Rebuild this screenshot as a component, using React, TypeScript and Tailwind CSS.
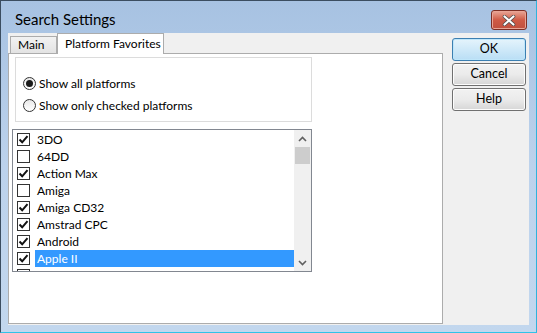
import React from "react";

const font = { fontFamily: '"Segoe UI", Lato, "Noto Sans", sans-serif' };

const items: { name: string; checked: boolean }[] = [
  { name: "3DO", checked: true },
  { name: "64DD", checked: false },
  { name: "Action Max", checked: true },
  { name: "Amiga", checked: false },
  { name: "Amiga CD32", checked: true },
  { name: "Amstrad CPC", checked: true },
  { name: "Android", checked: true },
  { name: "Apple II", checked: true },
  { name: "Apple IIGS", checked: true },
];

function Check({ checked }: { checked: boolean }) {
  return (
    <div className="w-[13px] h-[13px] border border-[#333333] bg-white flex items-center justify-center shrink-0">
      {checked && (
        <svg width="11" height="11" viewBox="0 0 11 11">
          <path d="M1.5 5.5 L4.2 8.3 L9.5 2.2" fill="none" stroke="#111" strokeWidth="2" />
        </svg>
      )}
    </div>
  );
}

function Radio({ on }: { on: boolean }) {
  return (
    <div className="w-[13px] h-[13px] rounded-full border border-[#333333] bg-gradient-to-b from-[#e9e9e9] to-white flex items-center justify-center shrink-0">
      {on && <div className="w-[7px] h-[7px] rounded-full bg-[#1a1a1a]" />}
    </div>
  );
}

function Btn({ label, primary }: { label: string; primary?: boolean }) {
  return (
    <div
      className={
        "h-[23px] w-[74px] rounded-[3px] border flex items-center justify-center text-[12.5px] text-black " +
        (primary
          ? "border-[#3c7fb1] bg-gradient-to-b from-[#e5f4fc] to-[#b9def5] shadow-[inset_0_0_0_1px_#bfe6fa]"
          : "border-[#707070] bg-gradient-to-b from-[#f2f2f2] via-[#ebebeb] to-[#d6d6d6] shadow-[inset_0_0_0_1px_#fcfcfc]")
      }
    >
      {label}
    </div>
  );
}

export default function App() {
  return (
    <div
      style={font}
      className="w-[537px] h-[333px] border border-[#3b4d60] border-r-[#2fb3dc] border-b-[#2fc3e8] bg-gradient-to-b from-[#a7c2e2] via-[#bcd2ec] to-[#c2d7ee] flex flex-col overflow-hidden"
    >
      {/* title bar */}
      <div className="h-[32px] flex items-start shrink-0">
        <div className="ml-[14px] mt-[8px] text-[15px] text-black leading-[20px] whitespace-nowrap">Search Settings</div>
        <div className="ml-auto mr-[9px] mt-[9px] w-[36px] h-[20px] rounded-[3px] border border-[#7d2f25] bg-gradient-to-b from-[#e8a798] via-[#cf5a45] to-[#c0503e] flex items-center justify-center shadow-[inset_0_0_0_1px_#e9a495]">
          <svg width="14" height="11" viewBox="0 0 14 11">
            <path d="M2.5 1.5 L11.5 9.5 M11.5 1.5 L2.5 9.5" stroke="#4a4a4a" strokeWidth="3.6" strokeLinecap="round" />
            <path d="M2.5 1.5 L11.5 9.5 M11.5 1.5 L2.5 9.5" stroke="#ffffff" strokeWidth="2.2" strokeLinecap="round" />
          </svg>
        </div>
      </div>

      {/* client */}
      <div className="mx-[7px] h-[292px] bg-[#f0f0f0] flex shrink-0">
        <div className="w-[435px] flex flex-col">
          {/* tabs */}
          <div className="h-[20px] flex items-end relative z-10">
            <div className="ml-[2px] w-[47px] h-[17px] border border-b-0 border-[#acacac] bg-gradient-to-b from-[#f2f2f2] to-[#e3e3e3] text-[12px] text-black flex items-center pl-[7px] leading-none whitespace-nowrap">
              Main
            </div>
            <div className="w-[107px] h-[21px] -mb-[1px] border border-b-0 border-[#acacac] bg-white text-[12px] text-black flex items-center pl-[7px] leading-none whitespace-nowrap">
              Platform Favorites
            </div>
          </div>
          {/* panel */}
          <div className="h-[271px] border border-[#acacac] bg-white flex flex-col">
            <div className="ml-[6px] mt-[3px] w-[297px] h-[65px] border border-[#dcdcdc] relative">
              <div className="absolute left-[7px] top-[19px] h-[13px] flex items-center gap-[3px] text-[12px] text-black whitespace-nowrap">
                <Radio on />
                <span>Show all platforms</span>
              </div>
              <div className="absolute left-[7px] top-[41px] h-[13px] flex items-center gap-[3px] text-[12px] text-black whitespace-nowrap">
                <Radio on={false} />
                <span>Show only checked platforms</span>
              </div>
            </div>
            {/* list */}
            <div className="ml-[3px] mt-[7px] w-[300px] h-[143px] border border-[#828790] flex overflow-hidden">
              <div className="flex-1 flex flex-col pt-[1px] overflow-hidden">
                {items.map((it, i) => {
                  const sel = i === 7;
                  return (
                    <div key={it.name} className="h-[17px] flex items-center shrink-0">
                      <div className="ml-[4px]">
                        <Check checked={it.checked} />
                      </div>
                      <div
                        className={
                          "ml-[5px] h-[17px] flex-1 flex items-center pl-[2px] text-[12px] whitespace-nowrap " +
                          (sel ? "bg-[#3399ff] text-white" : "text-black")
                        }
                      >
                        {i < 8 ? it.name : ""}
                      </div>
                    </div>
                  );
                })}
              </div>
              <div className="w-[17px] bg-[#f0f0f0] flex flex-col items-center shrink-0">
                <div className="h-[17px] flex items-center justify-center">
                  <svg width="9" height="6" viewBox="0 0 9 6">
                    <path d="M1 5 L4.5 1.5 L8 5" fill="none" stroke="#606060" strokeWidth="1.6" />
                  </svg>
                </div>
                <div className="w-[15px] h-[17px] bg-[#cdcdcd]" />
                <div className="flex-1" />
                <div className="h-[17px] flex items-center justify-center">
                  <svg width="9" height="6" viewBox="0 0 9 6">
                    <path d="M1 1 L4.5 4.5 L8 1" fill="none" stroke="#606060" strokeWidth="1.6" />
                  </svg>
                </div>
              </div>
            </div>
          </div>
        </div>
        {/* buttons */}
        <div className="ml-[9px] pt-[5px] flex flex-col gap-[2px]">
          <Btn label="OK" primary />
          <Btn label="Cancel" />
          <Btn label="Help" />
        </div>
      </div>
    </div>
  );
}
